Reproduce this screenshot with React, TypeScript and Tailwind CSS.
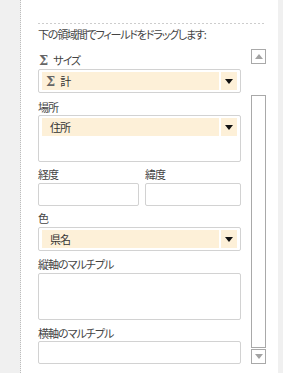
import React from 'react';

const font = "[font-family:'Noto_Sans_CJK_JP','Noto_Sans',sans-serif] [font-feature-settings:'palt'] tracking-[-1px]";

function Sigma({ className = '' }: { className?: string }) {
  return (
    <span className={`[font-family:'DejaVu_Serif',serif] font-bold text-[13px] leading-none text-[#666] tracking-normal ${className}`}>
      Σ
    </span>
  );
}

function Label({ children, className = '' }: { children: React.ReactNode; className?: string }) {
  return <div className={`h-[14px] leading-[14px] text-[11px] text-[#444] ${className}`}>{children}</div>;
}

function Pill({ children }: { children: React.ReactNode }) {
  return (
    <div className="flex h-[18px]">
      <div className="flex-1 bg-[#fdf0d8] flex items-center text-[11px] text-[#333]">{children}</div>
      <div className="w-[2px] bg-white" />
      <div className="w-[16px] bg-[#fdf0d8] flex items-center justify-center">
        <svg width="8" height="5" viewBox="0 0 8 5">
          <path d="M0 0h8L4 5z" fill="#111" />
        </svg>
      </div>
    </div>
  );
}

export default function App() {
  return (
    <div className={`w-[283px] h-[373px] flex bg-white overflow-hidden ${font}`}>
      {/* left gutter */}
      <div className="w-[21px] bg-[#f0f0f0] border-r border-dotted border-[#bdbdbd]" />

      {/* main panel */}
      <div className="w-[257px] pt-[23px]">
        <div className="ml-[17px] w-[226px] h-px bg-[repeating-linear-gradient(90deg,#cdcdcd_0_2px,transparent_2px_4px)]" />
        <div className="ml-[17px] mt-[3px] h-[14px] leading-[14px] text-[11px] text-[#444] tracking-[-1.2px]">
          下の領域間でフィールドをドラッグします:
        </div>

        <div className="flex mt-[8px]">
          {/* field areas */}
          <div className="ml-[17px] w-[203px] flex flex-col">
            <Label className="mt-[4px] flex items-center gap-[5px]">
              <Sigma className="ml-px" />
              <span>サイズ</span>
            </Label>
            <div className="mt-[2px] h-[24px] border border-[#d2d2d2] rounded-[2px] p-[2px] pl-[3px] pr-[3px]">
              <Pill>
                <Sigma className="ml-[4px] mr-[5px]" />
                <span>計</span>
              </Pill>
            </div>

            <Label className="mt-[7px]">場所</Label>
            <div className="mt-px h-[47px] border border-[#d2d2d2] rounded-[2px] p-[2px] pl-[3px] pr-[3px]">
              <Pill>
                <span className="ml-[8px]">住所</span>
              </Pill>
            </div>

            <div className="flex gap-[6px] mt-[5px]">
              <div className="w-[101px]">
                <Label>経度</Label>
                <div className="mt-[2px] h-[23px] border border-[#d2d2d2] rounded-[2px]" />
              </div>
              <div className="flex-1">
                <Label>緯度</Label>
                <div className="mt-[2px] h-[23px] border border-[#d2d2d2] rounded-[2px]" />
              </div>
            </div>

            <Label className="mt-[5px]">色</Label>
            <div className="mt-[2px] h-[24px] border border-[#d2d2d2] rounded-[2px] p-[2px] pl-[3px] pr-[3px]">
              <Pill>
                <span className="ml-[8px]">県名</span>
              </Pill>
            </div>

            <Label className="mt-[6px]">縦軸のマルチプル</Label>
            <div className="mt-[2px] h-[47px] border border-[#d2d2d2] rounded-[2px]" />

            <Label className="mt-[6px]">横軸のマルチプル</Label>
            <div className="mt-px h-[23px] border border-[#d2d2d2] rounded-[2px]" />
          </div>

          {/* scroll control */}
          <div className="ml-[10px] w-[15px] flex flex-col">
            <div className="h-[15px] border border-[#a9a9a9] flex items-center justify-center">
              <svg width="8" height="5" viewBox="0 0 8 5">
                <path d="M0 5h8L4 0z" fill="#a3a3a3" />
              </svg>
            </div>
            <div className="mt-[31px] h-[253px] border border-[#a9a9a9]" />
            <div className="mt-[1px] h-[15px] border border-[#a9a9a9] flex items-center justify-center">
              <svg width="8" height="5" viewBox="0 0 8 5">
                <path d="M0 0h8L4 5z" fill="#a3a3a3" />
              </svg>
            </div>
          </div>
        </div>
      </div>

      {/* right gutter */}
      <div className="flex-1 bg-[#f0f0f0]" />
    </div>
  );
}
